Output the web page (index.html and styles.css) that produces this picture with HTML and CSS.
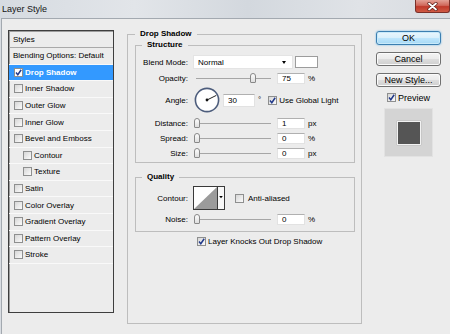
FILE: index.html
```html
<!DOCTYPE html>
<html lang="en">
<head>
    <meta charset="UTF-8">
    <meta name="viewport" content="width=device-width, initial-scale=1.0">
    <title>Layer Style</title>
    <link rel="stylesheet" href="styles.css">
</head>
<body>
    <div class="window">
        <div class="titlebar">
            <span class="title">Layer Style</span>
            <span class="close">
                <svg width="11" height="9" viewBox="0 0 11 9">
                    <path d="M2 1.5 L9 7.5 M9 1.5 L2 7.5" stroke="#5a1b16" stroke-width="3.2" stroke-linecap="round"/>
                    <path d="M2 1.5 L9 7.5 M9 1.5 L2 7.5" stroke="#fff" stroke-width="1.8" stroke-linecap="round"/>
                </svg>
            </span>
        </div>

        <div class="client">
            <ul class="styles-list">
                <li class="head">Styles</li>
                <li class="plain">Blending Options: Default</li>
                <li class="active">
                    <span class="cb"><svg viewBox="0 0 7 7"><path d="M1 3.6 L2.8 5.7 L6.2 0.8" /></svg></span>Drop Shadow
                </li>
                <li><span class="cb"></span>Inner Shadow</li>
                <li><span class="cb"></span>Outer Glow</li>
                <li><span class="cb"></span>Inner Glow</li>
                <li><span class="cb"></span>Bevel and Emboss</li>
                <li class="sub"><span class="cb"></span>Contour</li>
                <li class="sub"><span class="cb"></span>Texture</li>
                <li><span class="cb"></span>Satin</li>
                <li><span class="cb"></span>Color Overlay</li>
                <li><span class="cb"></span>Gradient Overlay</li>
                <li><span class="cb"></span>Pattern Overlay</li>
                <li><span class="cb"></span>Stroke</li>
            </ul>

            <fieldset class="group main">
                <legend>Drop Shadow</legend>

                <fieldset class="group inner structure">
                    <legend>Structure</legend>

                    <div class="row row-blend">
                        <span class="lbl">Blend Mode:</span>
                        <div class="select">Normal<span class="arrow"></span></div>
                        <div class="swatch"></div>
                    </div>

                    <div class="row row-opacity">
                        <span class="lbl">Opacity:</span>
                        <div class="slider"><span class="thumb" style="--v: 0.75"></span></div>
                        <div class="num">75</div><span class="unit">%</span>
                    </div>

                    <div class="row row-angle">
                        <span class="lbl">Angle:</span>
                        <svg class="dial" width="26" height="26" viewBox="0 0 26 26">
                            <circle cx="13" cy="13" r="11.6" fill="#fff" stroke="#4d5d7c" stroke-width="1.6"/>
                            <line x1="13" y1="13" x2="22.3" y2="8.4" stroke="#222" stroke-width="1"/>
                            <circle cx="13" cy="13" r="1.4" fill="#111"/>
                        </svg>
                        <div class="num angle">30</div><span class="deg">°</span>
                        <span class="cb global"><svg viewBox="0 0 7 7"><path d="M1 3.6 L2.8 5.7 L6.2 0.8" /></svg></span>
                        <span>Use Global Light</span>
                    </div>

                    <div class="row row-distance">
                        <span class="lbl">Distance:</span>
                        <div class="slider"><span class="thumb" style="--v: 0"></span></div>
                        <div class="num">1</div><span class="unit">px</span>
                    </div>

                    <div class="row">
                        <span class="lbl">Spread:</span>
                        <div class="slider"><span class="thumb" style="--v: 0"></span></div>
                        <div class="num">0</div><span class="unit">%</span>
                    </div>

                    <div class="row">
                        <span class="lbl">Size:</span>
                        <div class="slider"><span class="thumb" style="--v: 0"></span></div>
                        <div class="num">0</div><span class="unit">px</span>
                    </div>
                </fieldset>

                <fieldset class="group inner quality">
                    <legend>Quality</legend>

                    <div class="row row-contour">
                        <span class="lbl">Contour:</span>
                        <svg class="contour" width="32" height="24" viewBox="0 0 32 24">
                            <rect x="0.5" y="0.5" width="24" height="23" fill="#fff" stroke="#3a3a3a"/>
                            <path d="M1 23 L24 1 L24 23 Z" fill="#9b9b9b"/>
                            <rect x="24.5" y="0.5" width="7" height="23" fill="#f7f7f7" stroke="#3a3a3a"/>
                            <path d="M26.2 10 L29.8 10 L28 12.2 Z" fill="#000"/>
                        </svg>
                        <span class="cb anti"></span>
                        <span>Anti-aliased</span>
                    </div>

                    <div class="row row-noise">
                        <span class="lbl">Noise:</span>
                        <div class="slider"><span class="thumb" style="--v: 0"></span></div>
                        <div class="num">0</div><span class="unit">%</span>
                    </div>
                </fieldset>

                <div class="row knockout">
                    <span class="cb"><svg viewBox="0 0 7 7"><path d="M1 3.6 L2.8 5.7 L6.2 0.8" /></svg></span>
                    <span>Layer Knocks Out Drop Shadow</span>
                </div>
            </fieldset>

            <div class="side">
                <button class="btn default">OK</button>
                <button class="btn">Cancel</button>
                <button class="btn">New Style...</button>
                <div class="preview-check">
                    <span class="cb"><svg viewBox="0 0 7 7"><path d="M1 3.6 L2.8 5.7 L6.2 0.8" /></svg></span>Preview
                </div>
                <div class="preview">
                    <div class="preview-swatch"></div>
                </div>
            </div>
        </div>
    </div>
</body>
</html>
```

FILE: styles.css
```css
* {
    margin: 0;
    padding: 0;
    box-sizing: border-box;
}

body {
    width: 450px;
    height: 334px;
    overflow: hidden;
    font-family: "Liberation Sans", Arial, sans-serif;
    font-size: 8px;
    color: #000;
    background: #d9dde2;
}

.window {
    display: flex;
    flex-direction: column;
    height: 334px;
}

/* title bar */

.titlebar {
    height: 18px;
    display: flex;
    align-items: flex-start;
    background: linear-gradient(90deg, #d6dbe1 0%, #e2e5e9 30%, #d3d8de 55%, #e0e3e7 80%, #d8dce1 100%);
}

.title {
    font-size: 9px;
    padding: 4px 0 0 2px;
    color: #141414;
}

.close {
    margin-left: auto;
    width: 35px;
    height: 13px;
    display: flex;
    align-items: center;
    justify-content: center;
    border: 1px solid #7a3029;
    border-top: none;
    border-radius: 0 0 3px 3px;
    background: linear-gradient(#e3a196 0%, #d0685b 45%, #c0392b 55%, #cf5a44 100%);
}

/* client area */

.client {
    flex: 1;
    display: flex;
    align-items: flex-start;
    margin-left: 1px;
    padding: 10px 0 0 6px;
    border-left: 1px solid #a3a9b0;
    border-top: 1px solid #a3a9b0;
    background: #ececec;
}

/* styles list */

.styles-list {
    list-style: none;
    flex: none;
    width: 106px;
    height: 283px;
    margin-top: 1px;
    border: 1px solid #3e3e3e;
    box-shadow: inset 1px 1px 0 #9d9d9d;
    background: #ececec;
}

.styles-list li {
    height: 16.6px;
    display: flex;
    align-items: center;
    padding-left: 5px;
    border-bottom: 1px solid #f9f9f9;
    white-space: nowrap;
}

.styles-list .head {
    height: 17px;
    padding-left: 4px;
    border-bottom-color: #a9a9a9;
}

.styles-list .plain {
    padding-left: 4px;
}

.styles-list .sub {
    padding-left: 14px;
}

.styles-list .active {
    background: #3399ff;
    color: #fff;
    font-weight: bold;
}

.styles-list .active .cb {
    background: #fff;
}

/* checkboxes */

.cb {
    flex: none;
    width: 9px;
    height: 9px;
    margin-right: 2px;
    display: flex;
    align-items: center;
    justify-content: center;
    border: 1px solid #8e8f8f;
    background: linear-gradient(135deg, #d6d6d6, #fbfbfb);
}

.cb svg {
    width: 7px;
    height: 7px;
}

.cb path {
    fill: none;
    stroke: #21398a;
    stroke-width: 1.5;
}

/* group boxes */

.group {
    border: 1px solid #bdbdbd;
    min-width: 0;
}

.group legend {
    padding: 0 5px;
    font-weight: bold;
    line-height: 10px;
}

.main {
    flex: none;
    width: 235px;
    height: 295px;
    margin-left: 13px;
    padding: 1px 6px 0 7px;
}

.structure {
    padding: 5px 0 2px 6px;
}

.quality {
    margin-top: 9px;
    padding: 4px 0 5px 6px;
}

/* rows */

.row {
    display: flex;
    align-items: center;
    height: 14px;
    margin-top: 1px;
    white-space: nowrap;
}

.row-blend {
    margin-top: 0;
}

.row-opacity {
    margin-top: 2px;
}

.row-angle {
    height: 26px;
    margin-top: 2px;
}

.row-distance {
    margin-top: 3px;
}

.row-contour {
    height: 24px;
    margin-top: 0;
}

.row-noise {
    margin-top: 2px;
}

.lbl {
    flex: none;
    width: 46px;
    margin-right: 5px;
    text-align: right;
}

.select {
    position: relative;
    width: 100px;
    height: 14px;
    padding-left: 4px;
    line-height: 13px;
    background: #fff;
    border: 1px solid #e4e4e4;
}

.select .arrow {
    position: absolute;
    right: 6px;
    top: 5px;
    border-left: 2.5px solid transparent;
    border-right: 2.5px solid transparent;
    border-top: 3px solid #000;
}

.swatch {
    width: 23px;
    height: 12px;
    margin-left: 2px;
    background: #fff;
    border: 1px solid #9c9c9c;
}

.slider {
    position: relative;
    flex: none;
    width: 81px;
    height: 14px;
}

.slider::before {
    content: "";
    position: absolute;
    left: 3px;
    right: 3px;
    top: 7px;
    height: 1px;
    background: #a6a6a6;
}

.thumb {
    position: absolute;
    top: 2px;
    left: calc(var(--v) * 74px + 1px);
    width: 6px;
    height: 10px;
    border: 1px solid #888;
    border-radius: 3px 3px 1px 1px;
    background: linear-gradient(#fdfdfd, #dedede);
}

.num {
    flex: none;
    width: 28px;
    height: 11px;
    margin-left: 3px;
    padding-left: 4px;
    line-height: 9px;
    background: #fff;
    border: 1px solid #e2e2e2;
    border-top-color: #b0b0b0;
}

.unit {
    margin-left: 3px;
}

.dial {
    flex: none;
    margin-left: 1px;
}

.num.angle {
    width: 32px;
    height: 13px;
    line-height: 11px;
}

.deg {
    align-self: flex-start;
    margin: 8px 0 0 3px;
}

.cb.global {
    margin-left: 7px;
}

.contour {
    flex: none;
}

.cb.anti {
    margin: 0 4px 0 10px;
}

.knockout {
    margin: 2px 0 0 62px;
}

/* buttons column */

.side {
    flex: none;
    width: 65px;
    margin: 2px 0 0 14px;
    display: flex;
    flex-direction: column;
    align-items: center;
}

.btn {
    width: 65px;
    height: 14px;
    margin-bottom: 7px;
    font-family: "Liberation Sans", Arial, sans-serif;
    font-size: 9px;
    color: #000;
    border: 1px solid #707070;
    border-radius: 3px;
    background: linear-gradient(#f4f4f4 0%, #ebebeb 48%, #dddddd 52%, #cfcfcf 100%);
    box-shadow: inset 0 0 0 1px #fbfbfb;
}

.btn.default {
    border-color: #3c7fb1;
    background: linear-gradient(#eaf6fd 0%, #d9f0fc 48%, #bee6fd 52%, #a7d9f5 100%);
    box-shadow: inset 0 0 0 1px #c9eafa, 0 0 2px #5fb2e6;
}

.preview-check {
    display: flex;
    align-items: center;
    height: 11px;
    margin-top: -2px;
    font-size: 9px;
}

.preview {
    width: 49px;
    height: 49px;
    margin-top: 5px;
    display: flex;
    align-items: center;
    justify-content: center;
    background: #d4d4d4;
    border: 1px solid #e2e2e2;
}

.preview-swatch {
    width: 24px;
    height: 24px;
    background: #555;
    border: 1px solid #f2f2f2;
    box-shadow: 0 0 1px #8a8a8a;
}
```
